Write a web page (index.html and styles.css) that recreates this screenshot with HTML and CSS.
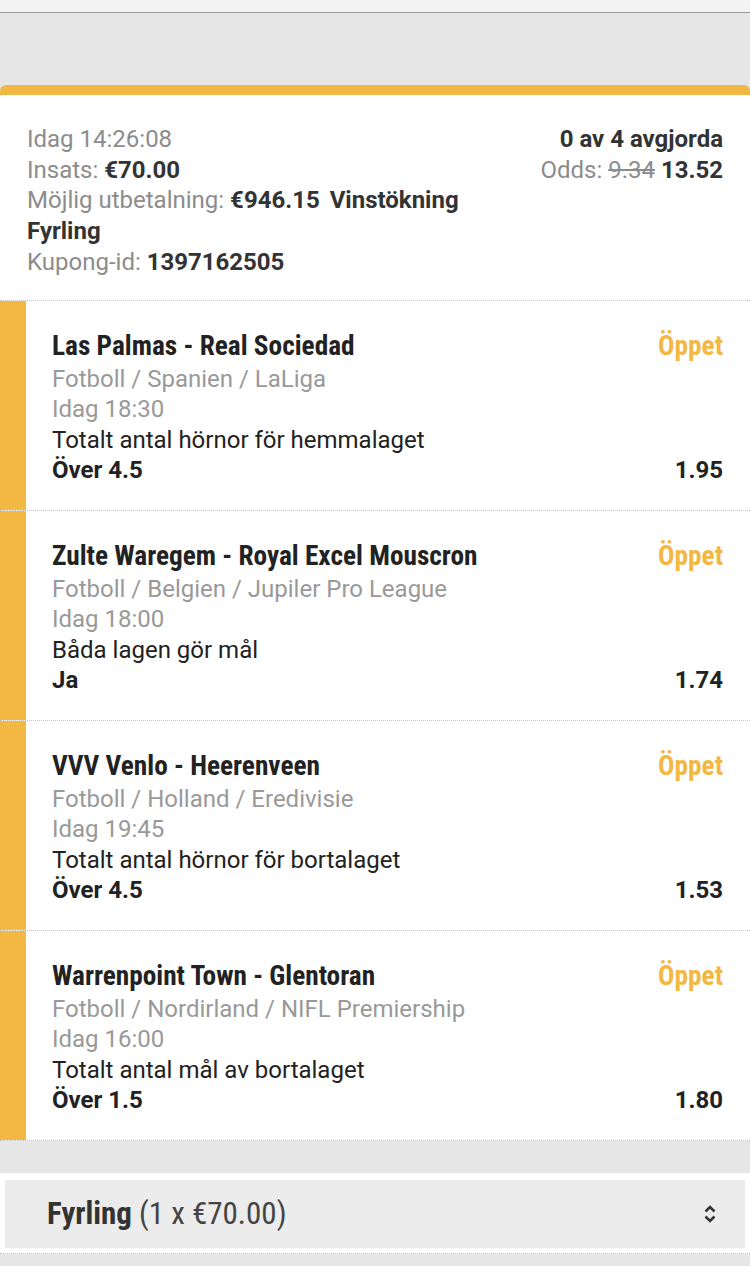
FILE: index.html
```html
<!DOCTYPE html>
<html lang="sv">
<head>
    <meta charset="UTF-8">
    <meta name="viewport" content="width=device-width, initial-scale=1.0">
    <title>Kupong</title>
    <link rel="stylesheet" href="styles.css">
</head>
<body>

    <div class="topbar"></div>

    <div class="kupong">
        <div class="kupong-head">
            <div class="head-left">
                <div>Idag 14:26:08</div>
                <div>Insats: <strong>€70.00</strong></div>
                <div>Möjlig utbetalning: <strong>€946.15</strong> <strong class="boost">Vinstökning</strong> <strong>Fyrling</strong></div>
                <div>Kupong-id: <strong>1397162505</strong></div>
            </div>
            <div class="head-right">
                <div class="avgjorda">0 av 4 avgjorda</div>
                <div>Odds: <s>9.34</s> <strong>13.52</strong></div>
            </div>
        </div>

        <div class="val">
            <div class="strip"></div>
            <div class="val-body">
                <div class="val-top">
                    <span class="match">Las Palmas - Real Sociedad</span>
                    <span class="status">Öppet</span>
                </div>
                <div class="muted">Fotboll / Spanien / LaLiga</div>
                <div class="muted">Idag 18:30</div>
                <div>Totalt antal hörnor för hemmalaget</div>
                <div class="val-bottom"><strong>Över 4.5</strong><strong>1.95</strong></div>
            </div>
        </div>

        <div class="val">
            <div class="strip"></div>
            <div class="val-body">
                <div class="val-top">
                    <span class="match">Zulte Waregem - Royal Excel Mouscron</span>
                    <span class="status">Öppet</span>
                </div>
                <div class="muted">Fotboll / Belgien / Jupiler Pro League</div>
                <div class="muted">Idag 18:00</div>
                <div>Båda lagen gör mål</div>
                <div class="val-bottom"><strong>Ja</strong><strong>1.74</strong></div>
            </div>
        </div>

        <div class="val">
            <div class="strip"></div>
            <div class="val-body">
                <div class="val-top">
                    <span class="match">VVV Venlo - Heerenveen</span>
                    <span class="status">Öppet</span>
                </div>
                <div class="muted">Fotboll / Holland / Eredivisie</div>
                <div class="muted">Idag 19:45</div>
                <div>Totalt antal hörnor för bortalaget</div>
                <div class="val-bottom"><strong>Över 4.5</strong><strong>1.53</strong></div>
            </div>
        </div>

        <div class="val">
            <div class="strip"></div>
            <div class="val-body">
                <div class="val-top">
                    <span class="match">Warrenpoint Town - Glentoran</span>
                    <span class="status">Öppet</span>
                </div>
                <div class="muted">Fotboll / Nordirland / NIFL Premiership</div>
                <div class="muted">Idag 16:00</div>
                <div>Totalt antal mål av bortalaget</div>
                <div class="val-bottom"><strong>Över 1.5</strong><strong>1.80</strong></div>
            </div>
        </div>
    </div>

    <div class="system">
        <div class="select">
            <span><strong>Fyrling</strong> (1 x €70.00)</span>
            <svg class="chevrons" width="12" height="22" viewBox="0 0 12 22">
                <path d="M1.5 8.5 L6 4 L10.5 8.5" fill="none" stroke="#333" stroke-width="2.5"/>
                <path d="M1.5 13.5 L6 18 L10.5 13.5" fill="none" stroke="#333" stroke-width="2.5"/>
            </svg>
        </div>
    </div>

</body>
</html>
```

FILE: styles.css
```css
body {
    margin: 0;
    background: #e6e6e6;
    font-family: Roboto, 'Noto Sans', sans-serif;
    font-size: 24px;
    color: #222;
}

.topbar {
    height: 12px;
    background: #f2f3f2;
    border-bottom: 1px solid #9a9a9a;
    margin-bottom: 72px;
}

.kupong {
    background: #fff;
    border-top: 10px solid #f3b843;
    border-radius: 6px 6px 0 0;
}

.kupong-head {
    display: flex;
    justify-content: space-between;
    padding: 29px 27px 22px 27px;
    line-height: 30.7px;
    color: #8c8c8c;
    border-bottom: 1px dotted #c4c4c4;
}

.kupong-head strong {
    color: #333;
}

.kupong-head .boost {
    margin-left: 4px;
}

.head-left {
    max-width: 480px;
}

.head-right {
    text-align: right;
}

.avgjorda {
    color: #333;
    font-weight: bold;
}

.val {
    display: flex;
    border-bottom: 1px dotted #c4c4c4;
}

.strip {
    width: 26px;
    background: #f3b843;
    flex-shrink: 0;
}

.val-body {
    flex: 1;
    padding: 28px 27px 24px 26px;
    line-height: 30.5px;
}

.val-top {
    display: flex;
    justify-content: space-between;
    line-height: 35px;
    font-family: 'Roboto Condensed', Roboto, sans-serif;
    font-weight: bold;
    font-size: 27.3px;
}

.match {
    color: #222;
}

.status {
    color: #f3b843;
}

.muted {
    color: #999;
}

.val-bottom {
    display: flex;
    justify-content: space-between;
}

.system {
    margin-top: 32px;
    background: #fff;
    padding: 7px 5px 5px 5px;
    border-bottom: 1px dotted #c4c4c4;
}

.select {
    height: 68px;
    background: #ececec;
    display: flex;
    align-items: center;
    justify-content: space-between;
    padding: 0 29px 0 42px;
    font-family: 'Roboto Condensed', Roboto, sans-serif;
    font-size: 31px;
    color: #444;
}

.select strong {
    color: #333;
}

.chevrons {
    display: block;
}
```
